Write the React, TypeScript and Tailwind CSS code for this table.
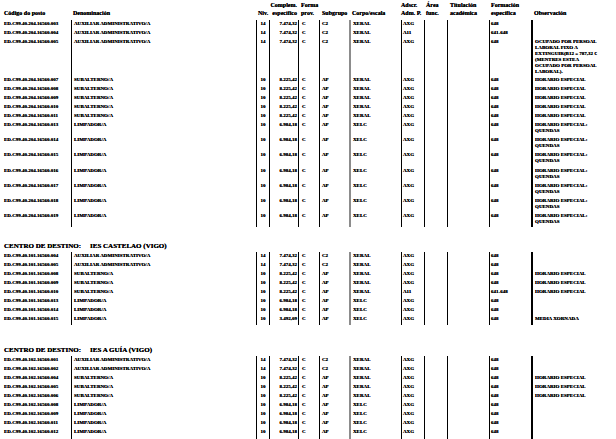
import React from "react";

type Row = {
  code: string;
  den: string;
  niv: string;
  comp: string;
  forma: string;
  sub: string;
  corpo: string;
  adscr: string;
  form: string;
  obs: string[];
  h: string;
};

// column boxes: widths follow the printed rules (x = 0,71,256,269,298,319,349,401,424,447,489,531)
const bodyCols = [
  "w-[71px] pl-[4px]",
  "w-[185px] pl-[2px] border-l border-solid border-black",
  "w-[13px] text-center border-l border-solid border-black",
  "w-[29px] text-right pr-[1px] border-l border-solid border-black",
  "w-[21px] pl-[3px] border-l border-solid border-black",
  "w-[30px] pl-[2px] border-l border-solid border-black",
  "w-[52px] pl-[2px] border-l-2 border-solid border-[#8c8c8c]",
  "w-[23px] pl-[1px] border-l border-solid border-black",
  "w-[23px] border-l border-solid border-black",
  "w-[42px] border-l border-solid border-black",
  "w-[42px] pl-[1px] border-l border-solid border-black",
  "w-[85px] pl-[2px] border-l-2 border-solid border-black",
];

const headCols = [
  { cls: "w-[71px] pl-[4px]", top: "", bottom: "Código do posto" },
  { cls: "w-[185px] pl-[2px]", top: "", bottom: "Denominación" },
  { cls: "w-[13px] pl-[2px]", top: "", bottom: "Niv." },
  { cls: "w-[29px] text-right pr-[1px]", top: "Complem.", bottom: "específico" },
  { cls: "w-[21px] pl-[3px]", top: "Forma", bottom: "prov." },
  { cls: "w-[30px] pl-[3px]", top: "", bottom: "Subgrupo" },
  { cls: "w-[52px] pl-[3px]", top: "", bottom: "Corpo/escala" },
  { cls: "w-[23px]", top: "Adscr.", bottom: "Adm. P." },
  { cls: "w-[23px] pl-[2px]", top: "Área", bottom: "func." },
  { cls: "w-[42px] pl-[3px]", top: "Titulación", bottom: "académica" },
  { cls: "w-[42px] pl-[2px]", top: "Formación", bottom: "específica" },
  { cls: "w-[85px] pl-[3px]", top: "", bottom: "Observación" },
];

const aux = (code: string, adscr = "AXG", form = "648", obs: string[] = []): Row => ({
  code,
  den: "AUXILIAR ADMINISTRATIVO/A",
  niv: "14",
  comp: "7.474,32",
  forma: "C",
  sub: "C2",
  corpo: "XERAL",
  adscr,
  form,
  obs,
  h: "h-[9px]",
});

const sub = (code: string, adscr = "AXG", form = "648", obs: string[] = ["HORARIO ESPECIAL"]): Row => ({
  code,
  den: "SUBALTERNO/A",
  niv: "10",
  comp: "8.225,42",
  forma: "C",
  sub: "AP",
  corpo: "XERAL",
  adscr,
  form,
  obs,
  h: "h-[9px]",
});

const limp = (code: string, obs: string[] = [], comp = "6.984,18", h = "h-[9px]"): Row => ({
  code,
  den: "LIMPADOR/A",
  niv: "10",
  comp,
  forma: "C",
  sub: "AP",
  corpo: "XELC",
  adscr: "AXG",
  form: "648",
  obs,
  h,
});

const quendas = ["HORARIO ESPECIAL:", "QUENDAS"];

const section1: Row[] = [
  aux("ED.C99.40.204.16560.003"),
  aux("ED.C99.40.204.16560.004", "A11", "641-648"),
  {
    ...aux("ED.C99.40.204.16560.005"),
    obs: [
      "OCUPADO POR PERSOAL",
      "LABORAL FIXO A",
      "EXTINGUIR(B12 = 787,32 €",
      "(MENTRES ESTEA",
      "OCUPADO POR PERSOAL",
      "LABORAL).",
    ],
    h: "h-[38px]",
  },
  sub("ED.C99.40.204.16560.007"),
  sub("ED.C99.40.204.16560.008"),
  sub("ED.C99.40.204.16560.009"),
  sub("ED.C99.40.204.16560.010"),
  sub("ED.C99.40.204.16560.011"),
  limp("ED.C99.40.204.16560.013", quendas, "6.984,18", "h-[15.2px]"),
  limp("ED.C99.40.204.16560.014", quendas, "6.984,18", "h-[15.2px]"),
  limp("ED.C99.40.204.16560.015", quendas, "6.984,18", "h-[15.2px]"),
  limp("ED.C99.40.204.16560.016", quendas, "6.984,18", "h-[15.2px]"),
  limp("ED.C99.40.204.16560.017", quendas, "6.984,18", "h-[15.2px]"),
  limp("ED.C99.40.204.16560.018", quendas, "6.984,18", "h-[15.2px]"),
  limp("ED.C99.40.204.16560.019", quendas, "6.984,18", "h-[15.2px]"),
];

const section2: Row[] = [
  aux("ED.C99.40.101.16560.004"),
  aux("ED.C99.40.101.16560.005"),
  sub("ED.C99.40.101.16560.008"),
  sub("ED.C99.40.101.16560.009"),
  sub("ED.C99.40.101.16560.010", "A11", "641-648"),
  limp("ED.C99.40.101.16560.013"),
  limp("ED.C99.40.101.16560.014"),
  limp("ED.C99.40.101.16560.015", ["MEDIA XORNADA"], "3.492,09"),
];

const section3: Row[] = [
  aux("ED.C99.40.102.16560.001"),
  aux("ED.C99.40.102.16560.002"),
  sub("ED.C99.40.102.16560.004"),
  sub("ED.C99.40.102.16560.005"),
  sub("ED.C99.40.102.16560.006"),
  limp("ED.C99.40.102.16560.008"),
  limp("ED.C99.40.102.16560.009"),
  limp("ED.C99.40.102.16560.011"),
  limp("ED.C99.40.102.16560.012"),
];

function DataRow({ row }: { row: Row }) {
  const cells = [
    [row.code],
    [row.den],
    [row.niv],
    [row.comp],
    [row.forma],
    [row.sub],
    [row.corpo],
    [row.adscr],
    [],
    [],
    [row.form],
    row.obs,
  ];
  return (
    <div className={`flex ${row.h}`}>
      {cells.map((lines, i) => (
        <div key={i} className={`${bodyCols[i]} shrink-0 pt-[1.5px] whitespace-nowrap`}>
          {lines.map((l, j) => (
            <div key={j} className="leading-[6px]">
              {l}
            </div>
          ))}
        </div>
      ))}
    </div>
  );
}

function Spacer({ h }: { h: string }) {
  return (
    <div className={`flex ${h}`}>
      {bodyCols.map((c, i) => (
        <div key={i} className={`${c} shrink-0`} />
      ))}
    </div>
  );
}

function Heading({ name, className }: { name: string; className: string }) {
  return (
    <div className={`flex h-[9.5px] items-center text-[7px] leading-[9.5px] whitespace-nowrap ${className}`}>
      <span className="w-[90px] shrink-0 pl-[4px]">CENTRO DE DESTINO:</span>
      <span>{name}</span>
    </div>
  );
}

export default function App() {
  return (
    <div className="w-[616px] h-[439px] overflow-hidden bg-white text-black font-bold font-['Liberation_Serif',serif] text-[5px] [text-shadow:0_0_0.4px_#000]">
      <div className="flex h-[19.5px] pb-[2.5px] text-[6px]">
        {headCols.map((c, i) => (
          <div key={i} className={`${c.cls} shrink-0 flex flex-col justify-end whitespace-nowrap`}>
            {c.top && <div className="leading-[8px]">{c.top}</div>}
            <div className="leading-[8px]">{c.bottom}</div>
          </div>
        ))}
      </div>
      {section1.map((r) => (
        <DataRow key={r.code} row={r} />
      ))}

      <Heading name="IES CASTELAO (VIGO)" className="mt-[15.5px]" />
      {section2.map((r) => (
        <DataRow key={r.code} row={r} />
      ))}
      <Spacer h="h-[1.5px]" />

      <Heading name="IES A GUÍA (VIGO)" className="mt-[21px]" />
      {section3.map((r) => (
        <DataRow key={r.code} row={r} />
      ))}
      <Spacer h="h-[12px]" />
    </div>
  );
}
